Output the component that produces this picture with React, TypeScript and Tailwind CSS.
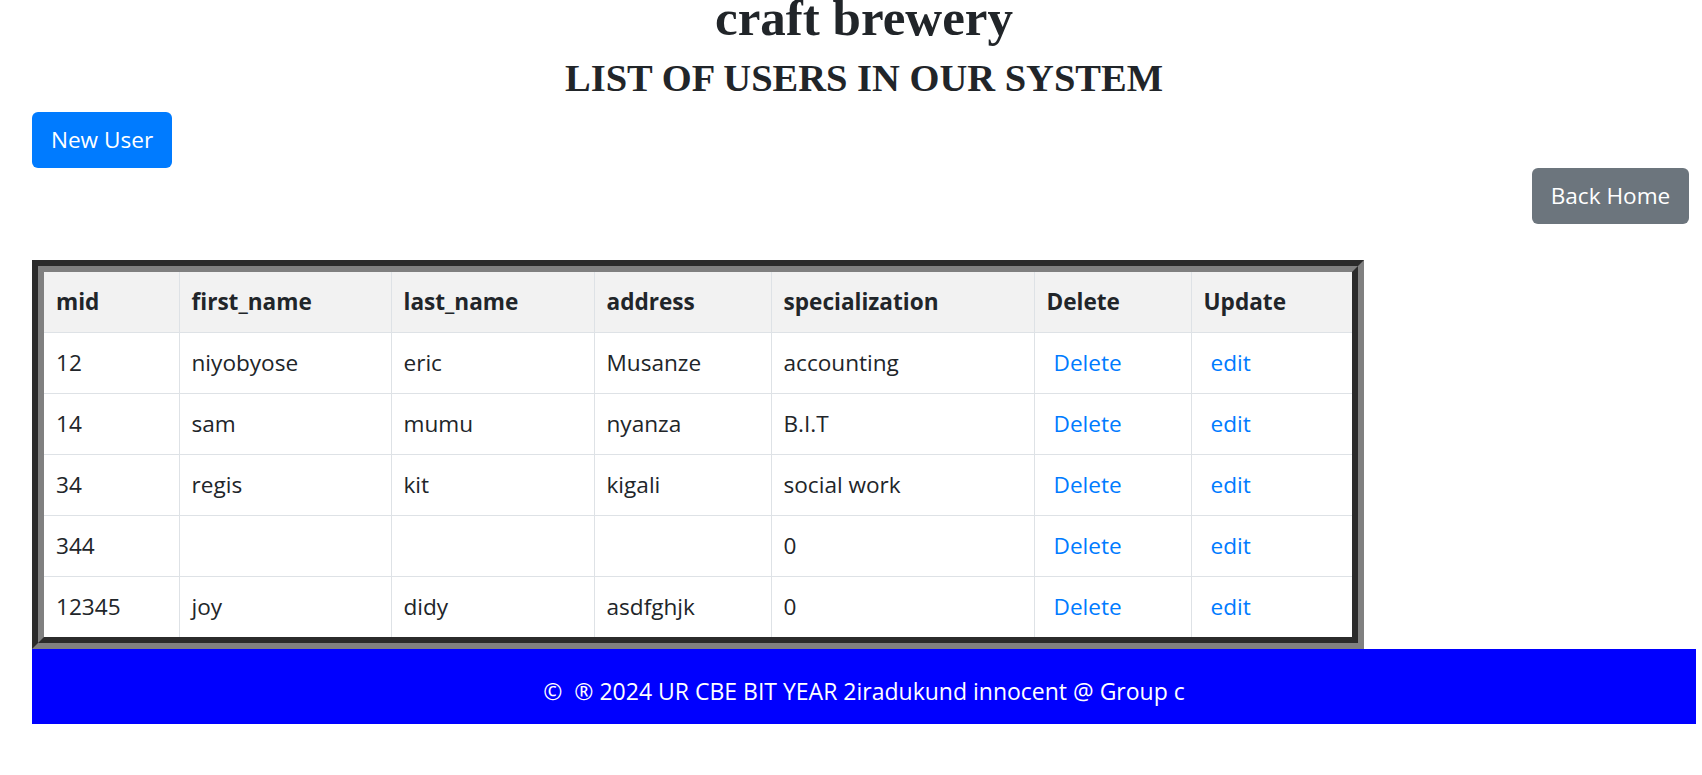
type Member = {
  mid: string;
  first_name: string;
  last_name: string;
  address: string;
  specialization: string;
};

const members: Member[] = [
  { mid: "12", first_name: "niyobyose", last_name: "eric", address: "Musanze", specialization: "accounting" },
  { mid: "14", first_name: "sam", last_name: "mumu", address: "nyanza", specialization: "B.I.T" },
  { mid: "34", first_name: "regis", last_name: "kit", address: "kigali", specialization: "social work" },
  { mid: "344", first_name: "", last_name: "", address: "", specialization: "0" },
  { mid: "12345", first_name: "joy", last_name: "didy", address: "asdfghjk", specialization: "0" },
];

const columns = [
  { label: "mid", width: "w-[135px]" },
  { label: "first_name", width: "w-[212px]" },
  { label: "last_name", width: "w-[203px]" },
  { label: "address", width: "w-[177px]" },
  { label: "specialization", width: "w-[263px]" },
  { label: "Delete", width: "w-[157px]" },
  { label: "Update", width: "w-[161px]" },
];

export default function App() {
  return (
    <div className="min-h-[775px] bg-white pl-[32px] pr-[6px] font-['Open_Sans',sans-serif] text-[22.6px] text-[#212529]">
      <h1 className="mt-[-7px] text-center font-['Liberation_Serif',serif] text-[51px] font-bold leading-[51px]">
        craft brewery
      </h1>
      <h2 className="mt-[11px] text-center font-['Liberation_Serif',serif] text-[38.5px] font-bold leading-[46px]">
        LIST OF USERS IN OUR SYSTEM
      </h2>

      <div className="mt-[11px]">
        <button className="h-[56px] w-[140px] rounded-[6px] bg-[#007bff] text-white">New User</button>
      </div>
      <div className="flex justify-end">
        <button className="mr-[7px] h-[56px] w-[157px] rounded-[6px] bg-[#6c757d] text-white">Back Home</button>
      </div>

      <div className="mt-[36px] w-[1332px] border-[6px] border-t-[#2b2b2b] border-l-[#2b2b2b] border-r-[#808080] border-b-[#808080]">
        <div className="border-[6px] border-t-[#808080] border-l-[#808080] border-r-[#2b2b2b] border-b-[#2b2b2b]">
          <table className="w-[1308px] table-fixed border-collapse">
            <thead>
              <tr className="bg-[#f2f2f2]">
                {columns.map((c, i) => (
                  <th
                    key={c.label}
                    className={`${c.width} ${i > 0 ? "border-l border-[#dee2e6]" : ""} border-b border-b-[#dee2e6] px-[12px] py-[12px] text-left font-bold leading-[36px]`}
                  >
                    {c.label}
                  </th>
                ))}
              </tr>
            </thead>
            <tbody>
              {members.map((m, r) => {
                const cells = [m.mid, m.first_name, m.last_name, m.address, m.specialization];
                const last = r === members.length - 1;
                return (
                  <tr key={m.mid}>
                    {cells.map((v, i) => (
                      <td
                        key={i}
                        className={`${i > 0 ? "border-l border-[#dee2e6]" : ""} ${last ? "" : "border-b border-b-[#dee2e6]"} px-[12px] py-[12px] leading-[36px]`}
                      >
                        {v}
                      </td>
                    ))}
                    <td className={`border-l border-[#dee2e6] ${last ? "" : "border-b border-b-[#dee2e6]"} px-[12px] py-[12px] leading-[36px]`}>
                      <a href="#" className="ml-[7px] text-[#007bff]">Delete</a>
                    </td>
                    <td className={`border-l border-[#dee2e6] ${last ? "" : "border-b border-b-[#dee2e6]"} px-[12px] py-[12px] leading-[36px]`}>
                      <a href="#" className="ml-[7px] text-[#007bff]">edit</a>
                    </td>
                  </tr>
                );
              })}
            </tbody>
          </table>
        </div>
      </div>

      <footer className="flex h-[75px] items-center justify-center bg-[#0000ff] pt-[10px] text-[23px] text-white">
        ©&nbsp; ® 2024 UR CBE BIT YEAR 2iradukund innocent @ Group c
      </footer>
    </div>
  );
}
